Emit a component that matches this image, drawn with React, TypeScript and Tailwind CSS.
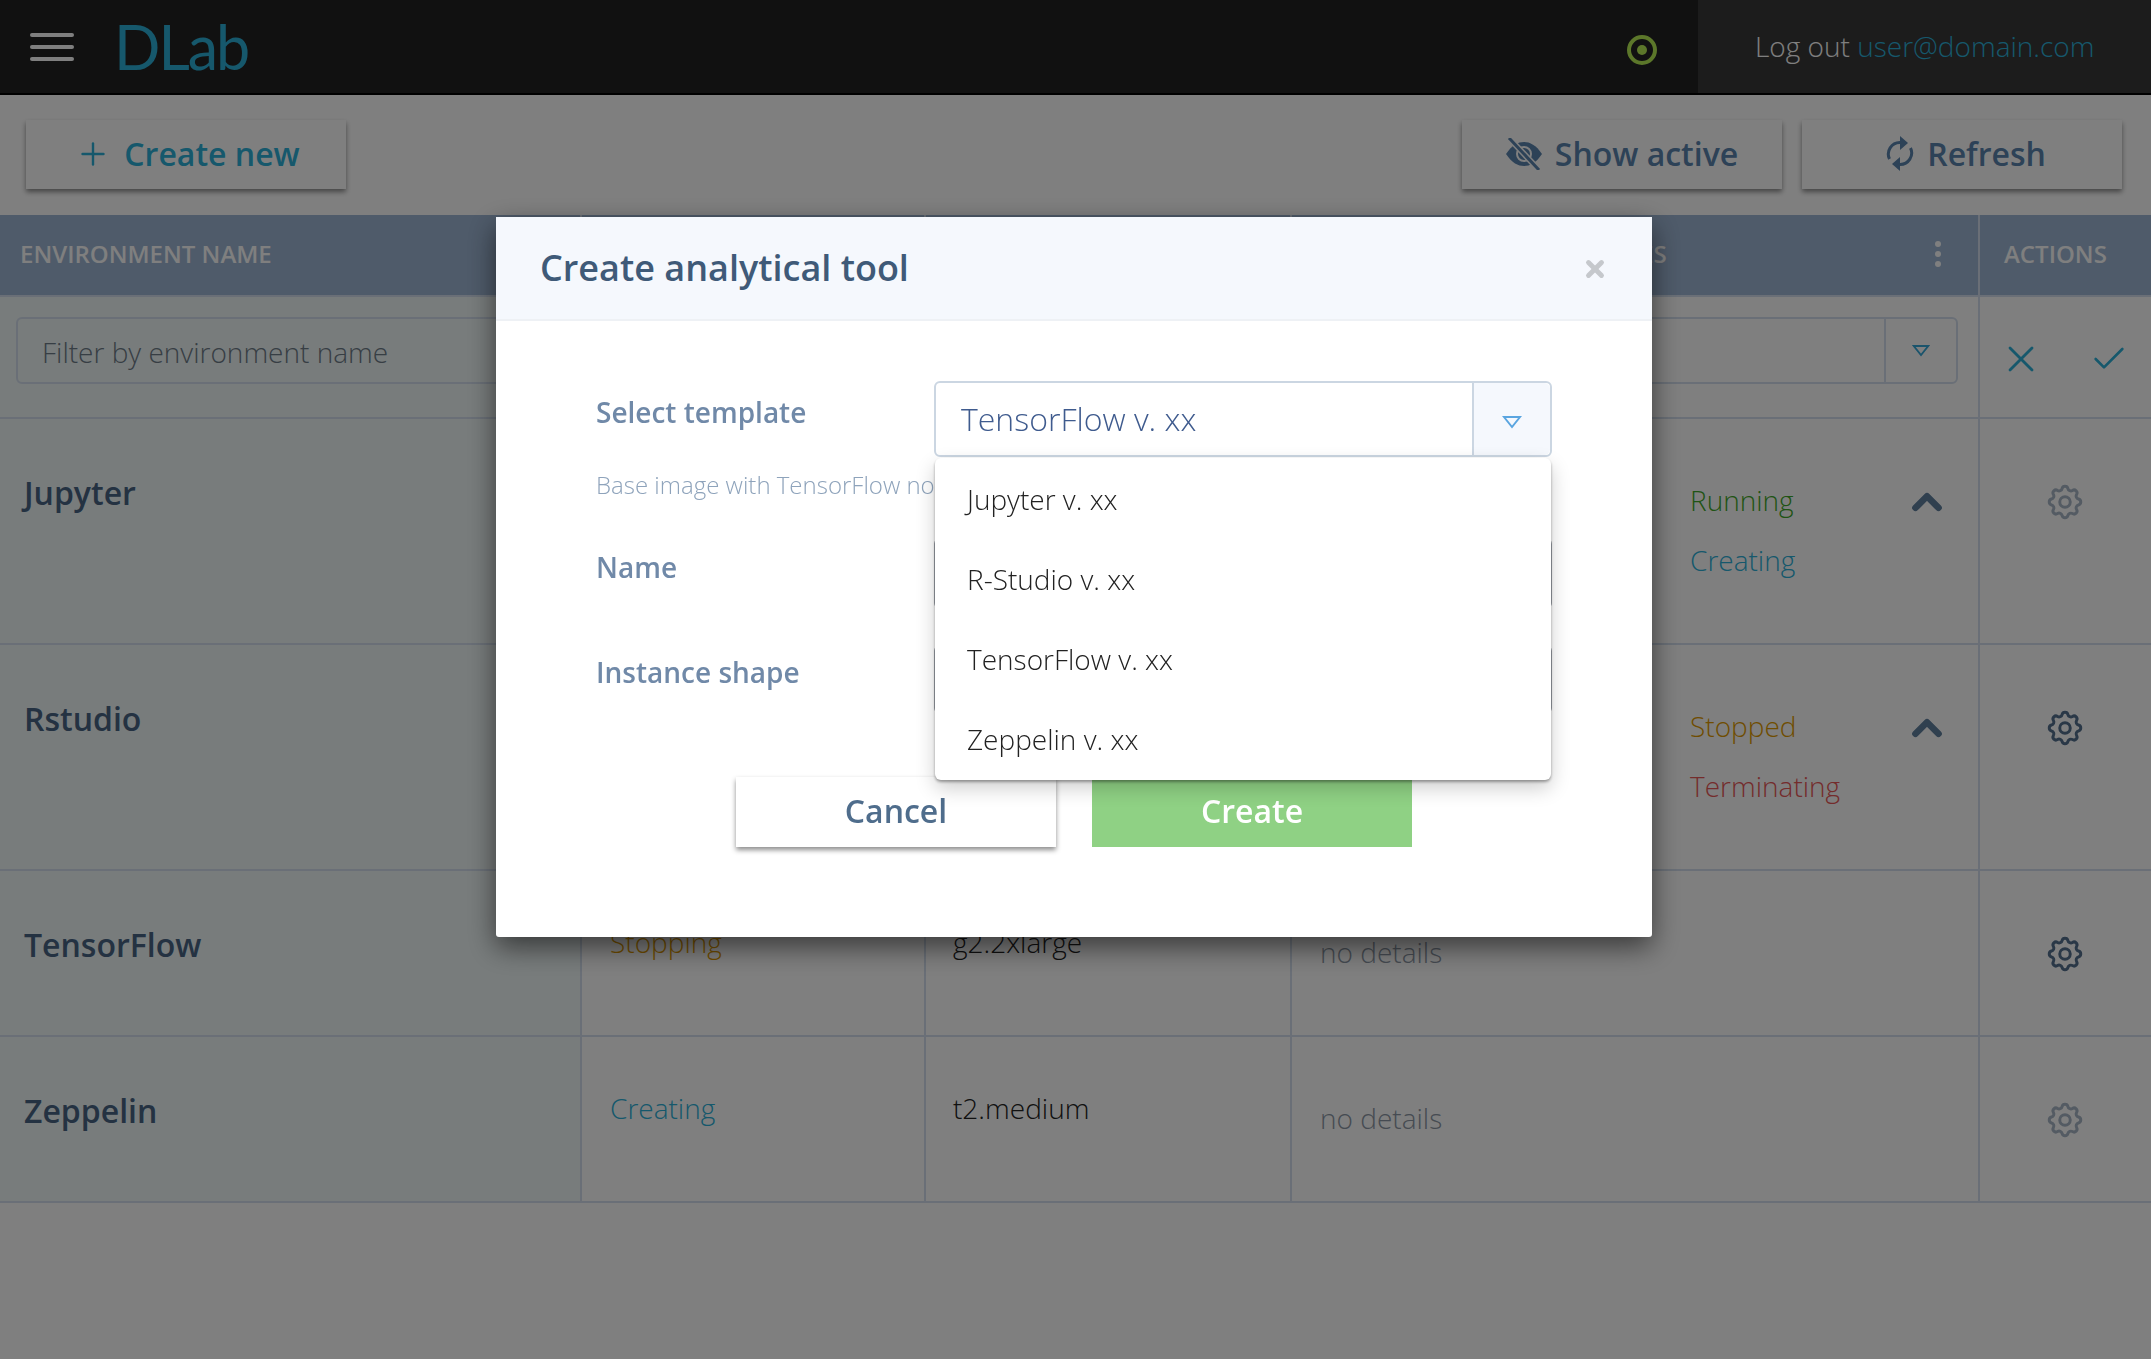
import { ChevronUp, X, Check, Plus } from "lucide-react";
import { HiOutlineCog } from "react-icons/hi";

const line = "border-[#d4dfee]";
const cols = "grid-cols-[582px_344px_366px_688px_171px]";

function Triangle({ className }: { className: string }) {
  return (
    <svg viewBox="0 0 20 14" className={className} fill="none" stroke="currentColor" strokeWidth="2">
      <path d="M2 2h16L10 12z" />
    </svg>
  );
}

function EyeOff() {
  return (
    <svg viewBox="0 0 36 32" className="w-[36px] h-[32px]">
      <path d="M0 16C6 7 12 4 18 4s12 3 18 12c-6 9-12 12-18 12S6 25 0 16z" fill="currentColor" />
      <circle cx="18" cy="16" r="7" fill="none" stroke="#fff" strokeWidth="2" />
      <path d="M3 0l30 32" stroke="#fff" strokeWidth="6" />
      <path d="M3 0l30 32" stroke="currentColor" strokeWidth="3" />
    </svg>
  );
}

function Sync() {
  return (
    <svg viewBox="0 0 28 35" className="w-[28px] h-[35px]" fill="currentColor">
      <path d="M3.5 23A11.5 11.5 0 0 1 14 6.5" fill="none" stroke="currentColor" strokeWidth="3" />
      <path d="M24.5 12A11.5 11.5 0 0 1 14 28.5" fill="none" stroke="currentColor" strokeWidth="3" />
      <path d="M14 0l8 7-8 7z" />
      <path d="M14 21l-8 7 8 7z" />
    </svg>
  );
}

function ToolbarButton({ children, className }: { children: React.ReactNode; className: string }) {
  return (
    <button className={`w-[320px] h-[69px] bg-white shadow-[0_3px_5px_rgba(0,0,0,0.45)] flex items-center justify-center gap-[13px] text-[32px] font-semibold ${className}`}>
      {children}
    </button>
  );
}

function Gear({ dim }: { dim?: boolean }) {
  return <HiOutlineCog className={`w-[42px] h-[42px] text-[#54708f] ${dim ? "opacity-50" : ""}`} strokeWidth={1.7} />;
}

function Row({ h, name, status, statusClass, shape, details, res, dim }: {
  h: string; name: string; status?: string; statusClass?: string; shape?: string; details?: boolean;
  res?: [string, string, string, string]; dim?: boolean;
}) {
  return (
    <div className={`grid ${cols} ${h} border-b-2 ${line}`}>
      <div className={`bg-[#f0f8f8] pl-[24px] pt-[52px] text-[32px] leading-[44px] font-semibold text-[#486484] border-r-2 ${line}`}>{name}</div>
      <div className={`pl-[28px] pt-[49px] text-[28px] leading-[44px] font-light border-r-2 ${line} ${statusClass ?? ""}`}>{status}</div>
      <div className={`pl-[27px] pt-[49px] text-[28px] leading-[44px] font-light text-[#222] border-r-2 ${line}`}>{shape}</div>
      <div className={`relative pl-[28px] pt-[59px] text-[28px] leading-[44px] font-light border-r-2 ${line}`}>
        {details && <span className="text-[#8c97a5]">no details</span>}
        {res && (
          <div className="ml-[370px] flex justify-between pr-[24px]">
            <div className="flex flex-col gap-[16px]">
              <span className={res[1]}>{res[0]}</span>
              <span className={res[3]}>{res[2]}</span>
            </div>
            <ChevronUp className="w-[46px] h-[46px] text-[#60809f] mr-[4px] mt-[1px]" strokeWidth={3.5} />
          </div>
        )}
      </div>
      <div className="flex justify-center pt-[62px] pr-[2px]">
        <Gear dim={dim} />
      </div>
    </div>
  );
}

export default function App() {
  return (
    <div className="relative min-h-screen bg-white font-['Open_Sans',sans-serif]">
      <header className="h-[95px] bg-[#222] border-b-2 border-black flex items-center justify-between">
        <div className="flex items-center">
          <div className="ml-[30px] w-[44px] flex flex-col gap-[8px]">
            <span className="h-[4px] rounded-sm bg-[#fff]" />
            <span className="h-[4px] rounded-sm bg-[#fff]" />
            <span className="h-[4px] rounded-sm bg-[#fff]" />
          </div>
          <span className="ml-[40px] font-['Lato',sans-serif] text-[61px] leading-none tracking-[-2px] text-[#2cb0d8]">DLab</span>
        </div>
        <div className="flex items-center h-full">
          <span className="mr-[41px] mt-[6px] w-[30px] h-[30px] rounded-full border-[4px] border-[#b8ee55] flex items-center justify-center">
            <span className="w-[10px] h-[10px] rounded-full bg-[#b8ee55]" />
          </span>
          <div className="h-full w-[453px] bg-[#383838] flex items-center pl-[57px] text-[28px] font-light text-[#fff]">
            <span className="-mt-[2px]">Log out <span className="text-[#2cb0d8]">user@domain.com</span></span>
          </div>
        </div>
      </header>

      <div className="h-[120px] flex items-start justify-between pt-[25px] px-[26px]">
        <ToolbarButton className="text-[#2cb0d8] pl-[3px] pb-[2px]">
          <Plus className="w-[36px] h-[36px]" strokeWidth={1.6} />
          Create new
        </ToolbarButton>
        <div className="flex gap-[20px] mr-[3px]">
          <ToolbarButton className="text-[#5a84ae] pb-[1px]"><EyeOff />Show active</ToolbarButton>
          <ToolbarButton className="text-[#5a84ae] pl-[8px] pb-[2px]"><Sync />Refresh</ToolbarButton>
        </div>
      </div>

      <div className={`grid ${cols} h-[82px] bg-[#9eb6d4] border-b-2 ${line} text-white text-[24px] font-semibold`}>
        <div className={`pl-[20px] pb-[2px] flex items-center border-r-2 ${line}`}>ENVIRONMENT NAME</div>
        <div className={`border-r-2 ${line}`} />
        <div className={`border-r-2 ${line}`} />
        <div className={`pl-[27px] pb-[2px] flex items-center justify-between pr-[37px] border-r-2 ${line}`}>
          <span>COMPUTATIONAL RESOURCES</span>
          <span className="flex flex-col gap-[4px]">
            <i className="w-[6px] h-[6px] rounded-full bg-white" />
            <i className="w-[6px] h-[6px] rounded-full bg-white" />
            <i className="w-[6px] h-[6px] rounded-full bg-white" />
          </span>
        </div>
        <div className="pl-[24px] pb-[2px] flex items-center">ACTIONS</div>
      </div>

      <div className={`grid ${cols} h-[122px] border-b-2 ${line}`}>
        <div className={`bg-[#f0f8f8] pl-[16px] pt-[20px] border-r-2 ${line}`}>
          <div className="h-[67px] w-[700px] border-2 border-[#d4dfee] rounded-md pl-[24px] pt-[2px] flex items-center text-[28px] font-light text-[#6f7c88]">Filter by environment name</div>
        </div>
        <div className={`border-r-2 ${line}`} />
        <div className={`border-r-2 ${line}`} />
        <div className={`border-r-2 ${line} pt-[20px] pr-[20px] flex justify-end`}>
          <div className="h-[67px] w-[400px] border-2 border-[#d4dfee] rounded-md flex justify-end">
            <div className={`w-[72px] border-l-2 ${line} flex justify-center pt-[25px]`}>
              <Triangle className="w-[18px] h-[13px] text-[#35a8d8]" />
            </div>
          </div>
        </div>
        <div className="flex items-start justify-between pl-[19px] pr-[22px] pt-[40px]">
          <X className="w-[44px] h-[44px] text-[#2cb0d8]" strokeWidth={1.5} />
          <Check className="w-[40px] h-[40px] text-[#2cb0d8] mt-[2px]" strokeWidth={1.6} />
        </div>
      </div>

      <Row h="h-[226px]" name="Jupyter" res={["Running", "text-[#3fa828]", "Creating", "text-[#2cb0d8]"]} dim />
      <Row h="h-[226px]" name="Rstudio" res={["Stopped", "text-[#e09a00]", "Terminating", "text-[#e85858]"]} />
      <Row h="h-[166px]" name="TensorFlow" status="Stopping" statusClass="text-[#e09a00]" shape="g2.2xlarge" details />
      <Row h="h-[166px]" name="Zeppelin" status="Creating" statusClass="text-[#2cb0d8]" shape="t2.medium" details dim />

      <div className="fixed inset-0 bg-black/50 pl-[496px] pt-[217px]">
        <div className="w-[1156px] h-[720px] bg-white rounded-[3px] shadow-[0_10px_28px_rgba(0,0,0,0.55)]">
          <div className="h-[104px] bg-[#f5f8fd] border-b-2 border-[#eef1f5] pl-[44px] pr-[44px] flex items-center justify-between">
            <h2 className="text-[36px] font-semibold text-[#3f5a78] -mt-[1px]">Create analytical tool</h2>
            <X className="w-[26px] h-[26px] text-[#c5c8cc] mt-[2px]" strokeWidth={4.5} />
          </div>
          <div className="pt-[60px] pl-[100px] pr-[100px]">
            <div className="flex h-[76px] relative">
              <div className="w-[338px] pt-[9px] text-[28px] leading-[44px] font-semibold text-[#7089a8]">Select template</div>
              <div className="w-[618px] border-2 border-[#cbd6e2] rounded-md flex">
                <div className="flex-1 pl-[25px] flex items-center text-[32px] font-light text-[#3f5b8e]">TensorFlow v. xx</div>
                <div className="w-[78px] bg-[#f5f8fd] border-l-2 border-[#cbd6e2] flex items-center justify-center rounded-r-md">
                  <Triangle className="w-[20px] h-[14px] text-[#5aa5e0] mt-[5px]" />
                </div>
              </div>
              <ul className="absolute z-10 left-[339px] top-[77px] w-[616px] h-[322px] bg-white rounded-md shadow-[0_2px_3px_rgba(0,0,0,0.35),0_8px_20px_rgba(0,0,0,0.2)] py-[2px] text-[28px] font-light text-[#222]">
                <li className="h-[80px] pl-[32px] pb-[3px] flex items-center">Jupyter v. xx</li>
                <li className="h-[80px] pl-[32px] pb-[3px] flex items-center">R-Studio v. xx</li>
                <li className="h-[80px] pl-[32px] pb-[3px] flex items-center">TensorFlow v. xx</li>
                <li className="h-[80px] pl-[32px] pb-[3px] flex items-center">Zeppelin v. xx</li>
              </ul>
            </div>
            <p className="mt-[10px] h-[36px] w-[338px] overflow-hidden leading-[36px] text-[24px] font-light text-[#8ea3bb] whitespace-nowrap">Base image with TensorFlow notebook</p>
            <div className="mt-[35px] flex h-[71px]">
              <div className="w-[338px] pt-[7px] text-[28px] leading-[44px] font-semibold text-[#7089a8]">Name</div>
              <div className="w-[618px] border-2 border-[#9a9fa6] rounded-md" />
            </div>
            <div className="mt-[36px] flex h-[69px]">
              <div className="w-[338px] pt-[5px] text-[28px] leading-[44px] font-semibold text-[#7089a8]">Instance shape</div>
              <div className="w-[618px] border-2 border-[#9a9fa6] rounded-md" />
            </div>
          </div>
          <div className="mt-[63px] flex justify-center gap-[36px]">
            <button className="w-[320px] h-[70px] pb-[2px] bg-white shadow-[0_3px_5px_rgba(0,0,0,0.45)] text-[32px] font-semibold text-[#4f6d8c]">Cancel</button>
            <button className="w-[320px] h-[70px] pb-[2px] bg-[#8fd184] text-[32px] font-semibold text-white">Create</button>
          </div>
        </div>
      </div>
    </div>
  );
}
